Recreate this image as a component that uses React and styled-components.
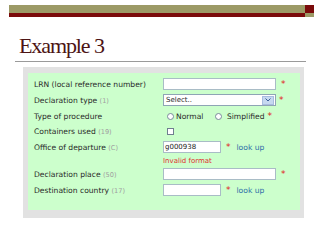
import React from 'react'
import styled, { createGlobalStyle } from 'styled-components'

const GlobalStyle = createGlobalStyle`
  html, body {
    margin: 0;
    padding: 0;
    background: #ffffff;
  }
  body {
    width: 320px;
    height: 240px;
    overflow: hidden;
  }
`

const Slide = styled.div`
  width: 320px;
  height: 240px;
  padding-top: 5px;
  box-sizing: border-box;
`

const TopBar = styled.div`
  margin-left: 9px;
  width: 305px;
  display: grid;
  grid-template-columns: 1fr 9px;
  grid-template-rows: 8px 4px;
`

const BarCell = styled.div`
  background: ${p => (p.red ? '#7a0a0a' : '#9c9a66')};
`

const Title = styled.h1`
  margin: 18px 0 0 19px;
  font-family: "Liberation Serif", "Times New Roman", serif;
  font-weight: normal;
  font-size: 22px;
  letter-spacing: -1.1px;
  line-height: 22px;
  color: #4d1414;
`

const Rule = styled.div`
  margin: 4px 0 0 15px;
  width: 291px;
  height: 1px;
  background: #9a9a9a;
`

const Panel = styled.div`
  margin: 5px 0 0 23px;
  width: 281px;
  padding: 6px 4px 8px 5px;
  box-sizing: border-box;
  background: #e2e2e2;
`

const Form = styled.div`
  background: #ccffcc;
  padding: 3px 0 12px 6px;
  font-family: "DejaVu Sans", Verdana, sans-serif;
  font-size: 7.6px;
  color: #2a2a2a;
`

const Row = styled.div`
  display: grid;
  grid-template-columns: 129px 1fr;
  align-items: center;
  height: ${p => p.h || 16}px;
`

const Label = styled.div`
  white-space: nowrap;
`

const Hint = styled.span`
  color: #a0a0a0;
  font-size: 6.6px;
`

const Field = styled.div`
  display: flex;
  align-items: center;
`

const Input = styled.div`
  width: ${p => (p.short ? 58 : 113)}px;
  height: 12px;
  box-sizing: border-box;
  border: 1px solid #a9bcc6;
  background: #fff;
  font-size: 7px;
  line-height: 10px;
  padding-left: 1px;
  color: #222;
`

const Select = styled.div`
  width: 113px;
  height: 12px;
  box-sizing: border-box;
  border: 1px solid #8fa5b5;
  background: #fff;
  display: flex;
  align-items: center;
  justify-content: space-between;
  padding-left: 2px;
  font-size: 7px;
`

const SelectButton = styled.div`
  width: 12px;
  height: 9px;
  margin-right: 1px;
  background: #c6d9f0;
  border: 1px solid #a8bde0;
  box-sizing: border-box;
  display: flex;
  align-items: center;
  justify-content: center;
`

const Star = styled.span`
  color: #e02020;
  font-size: 9px;
  margin-left: ${p => p.gap || 5}px;
  line-height: 8px;
`

const LookUp = styled.span`
  color: #2f6fa8;
  margin-left: 6px;
`

const Radio = styled.span`
  width: 7px;
  height: 7px;
  border: 1px solid #7a8a9a;
  border-radius: 50%;
  background: #fff;
  box-sizing: border-box;
  margin: 0 2px 0 ${p => p.gap || 4}px;
`

const Check = styled.span`
  width: 7px;
  height: 7px;
  border: 1px solid #6f7f8f;
  background: #fff;
  box-sizing: border-box;
  margin-left: 4px;
`

const Error = styled.div`
  color: #e03030;
  font-size: 7px;
`

export default function App() {
  return (
    <>
      <GlobalStyle />
      <Slide>
        <TopBar>
          <BarCell />
          <BarCell red />
          <BarCell red />
          <BarCell />
        </TopBar>
        <Title>Example 3</Title>
        <Rule />
        <Panel>
          <Form>
            <Row>
              <Label>LRN (local reference number)</Label>
              <Field>
                <Input />
                <Star>*</Star>
              </Field>
            </Row>
            <Row>
              <Label>Declaration type <Hint>(1)</Hint></Label>
              <Field>
                <Select>
                  Select..
                  <SelectButton>
                    <svg width="6" height="4" viewBox="0 0 6 4">
                      <path d="M0.5 0.5 L3 3 L5.5 0.5" fill="none" stroke="#3a5f9a" strokeWidth="1" />
                    </svg>
                  </SelectButton>
                </Select>
                <Star gap={3}>*</Star>
              </Field>
            </Row>
            <Row>
              <Label>Type of procedure</Label>
              <Field>
                <Radio />
                Normal
                <Radio gap={12} />
                &nbsp;Simplified
                <Star gap={3}>*</Star>
              </Field>
            </Row>
            <Row h={15}>
              <Label>Containers used <Hint>(19)</Hint></Label>
              <Field>
                <Check />
              </Field>
            </Row>
            <Row>
              <Label>Office of departure <Hint>(C)</Hint></Label>
              <Field>
                <Input short>g000938</Input>
                <Star>*</Star>
                <LookUp>look up</LookUp>
              </Field>
            </Row>
            <Row h={11}>
              <Label />
              <Error>Invalid format</Error>
            </Row>
            <Row>
              <Label>Declaration place <Hint>(50)</Hint></Label>
              <Field>
                <Input />
                <Star>*</Star>
              </Field>
            </Row>
            <Row>
              <Label>Destination country <Hint>(17)</Hint></Label>
              <Field>
                <Input short />
                <Star>*</Star>
                <LookUp>look up</LookUp>
              </Field>
            </Row>
          </Form>
        </Panel>
      </Slide>
    </>
  )
}
